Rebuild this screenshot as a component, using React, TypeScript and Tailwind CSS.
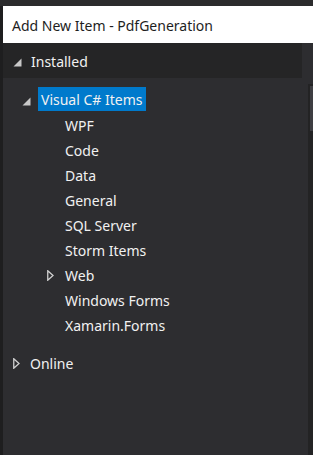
import React from "react";

const FilledTri = ({ className = "" }: { className?: string }) => (
  <svg width="9" height="9" viewBox="0 0 9 9" className={className}>
    <polygon points="8.5,0.5 8.5,8.5 0.5,8.5" fill="#c8c8c8" />
  </svg>
);

const HollowTri = ({ className = "" }: { className?: string }) => (
  <svg width="7" height="11" viewBox="0 0 7 11" className={className}>
    <polygon points="0.75,0.75 6,5.5 0.75,10.25" fill="none" stroke="#d0d0d0" strokeWidth="1.3" />
  </svg>
);

const children = ["WPF", "Code", "Data", "General", "SQL Server", "Storm Items", "Web", "Windows Forms", "Xamarin.Forms"];

export default function App() {
  return (
    <div
      className="w-[313px] h-[455px] flex flex-col bg-[#2d2d30] overflow-hidden text-[#f1f1f1]"
      style={{ fontFamily: '"Segoe UI", "Noto Sans", sans-serif' }}
    >
      <div className="h-[6px] bg-[#2b2b2c] shrink-0" />
      <div className="flex flex-1 min-h-0">
        <div className="w-[3px] bg-[#1e1e1f] shrink-0" />
        <div className="flex-1 flex flex-col min-w-0">
          <div className="h-[37px] bg-white flex items-center pl-[9px] text-[14px] text-[#1e1e1e] shrink-0 pt-[1px]">
            Add New Item - PdfGeneration
          </div>
          <div className="flex flex-1 min-h-0">
            <div className="flex-1 flex flex-col">
              <div className="h-[35px] w-[299px] bg-[#252526] flex items-center shrink-0">
                <FilledTri className="ml-[10px] mt-[3px]" />
                <span className="ml-[9px] text-[14px] leading-none mt-[3px]">Installed</span>
              </div>
              <div className="pt-[9px] flex flex-col">
                <div className="h-[25px] flex items-start">
                  <FilledTri className="ml-[19px] mt-[10px]" />
                  <div className="ml-[7px] h-[24px] bg-[#007acc] flex items-center px-[3px] text-[14px] pt-[1px]">
                    Visual C# Items
                  </div>
                </div>
                {children.map((c) => (
                  <div key={c} className="h-[25px] flex items-center text-[14px] pt-[1px]">
                    {c === "Web" ? (
                      <HollowTri className="ml-[44px] mr-[11px]" />
                    ) : (
                      <span className="w-[62px] shrink-0" />
                    )}
                    <span>{c}</span>
                  </div>
                ))}
                <div className="h-[25px] mt-[13px] flex items-center text-[14px] pt-[1px]">
                  <HollowTri className="ml-[10px] mr-[10px]" />
                  <span>Online</span>
                </div>
              </div>
            </div>
            <div className="w-[5px] shrink-0 pt-[41px] flex flex-col">
              <div className="flex-1 bg-[#232324] flex flex-col">
                <div className="h-[45px] mt-[2px] ml-[2px] bg-[#3e3e42]" />
              </div>
            </div>
          </div>
        </div>
      </div>
    </div>
  );
}
